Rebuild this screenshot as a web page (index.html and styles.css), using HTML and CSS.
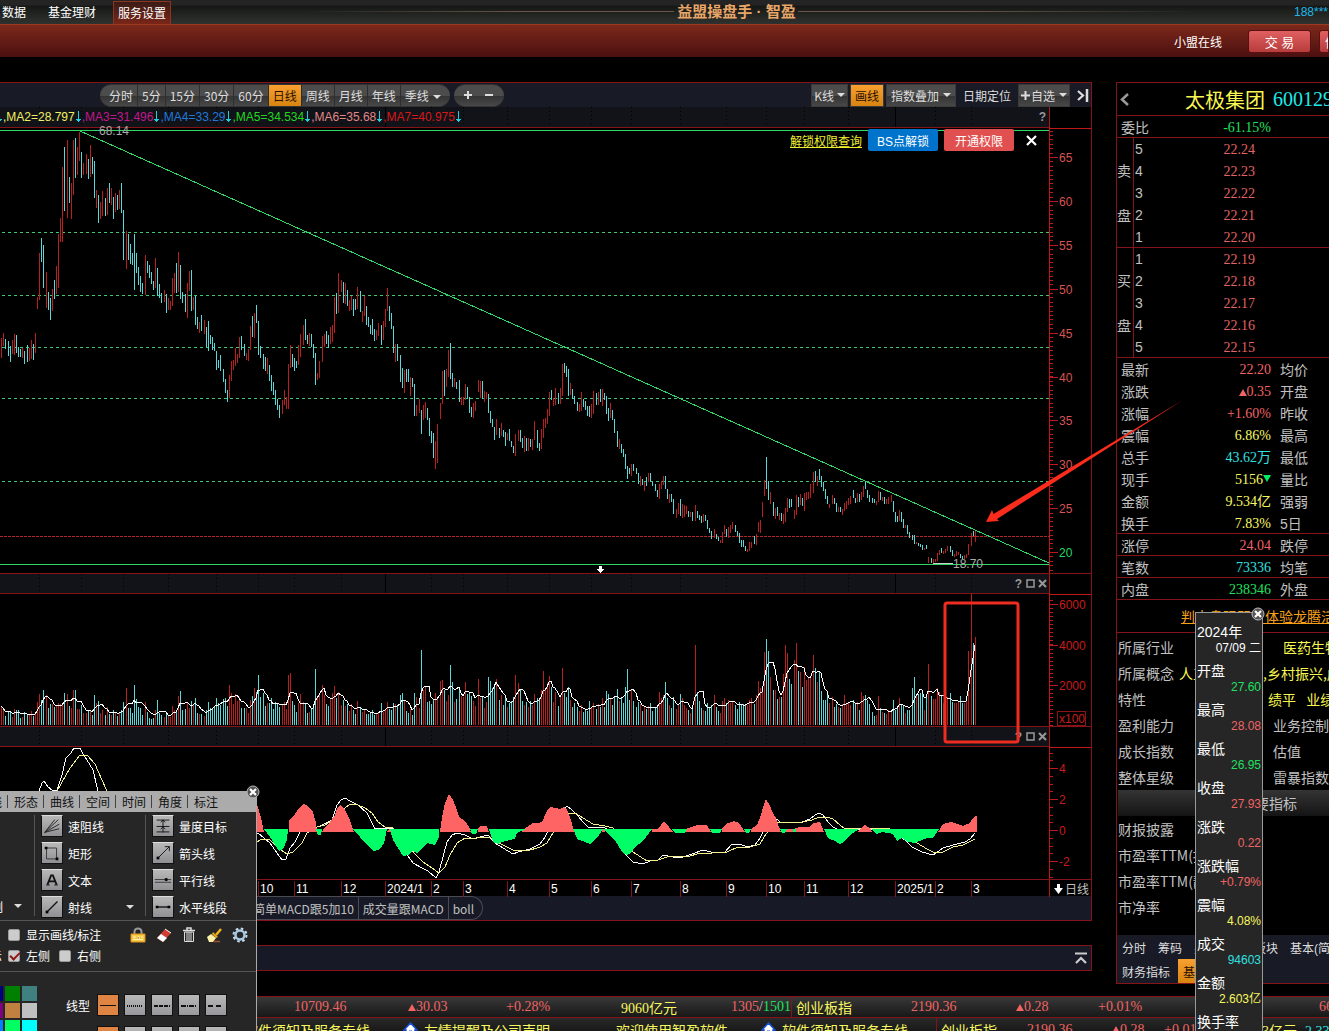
FILE: index.html
```
<!DOCTYPE html>
<html lang="zh-CN">
<head>
  <meta charset="UTF-8" />
  <meta name="viewport" content="width=device-width, initial-scale=1.0"/>
  <title>益盟操盘手 · 智盈</title>
  <link rel="stylesheet" href="styles.css">
</head>
<body>

  <!-- Title bar -->
  <header class="titlebar">
    <nav class="menu">
      <a href="#">数据</a>
      <a href="#">基金理财</a>
      <a href="#" class="active">服务设置</a>
    </nav>
    <span class="gold-line left"></span>
    <h1>益盟操盘手 · 智盈</h1>
    <span class="gold-line right"></span>
    <span class="user">188***</span>
  </header>
  <div class="redbar">
    <a href="#">小盟在线</a>
    <button class="trade-btn">交 易</button>
    <button class="trade-btn cut">信</button>
  </div>

  <main class="main">
    <div class="left-col">
      <section class="chart-box">
        <div class="toolbar">
          <div class="pill periods">
            <button>分时</button><button>5分</button><button>15分</button><button>30分</button><button>60分</button><button class="on">日线</button><button>周线</button><button>月线</button><button>年线</button><button class="last">季线<i class="caret"></i></button>
          </div>
          <div class="pill zoom">
            <button aria-label="放大"><svg width="10" height="10"><path d="M5 1v8M1 5h8" stroke="#ddd" stroke-width="2"/></svg></button>
            <button aria-label="缩小"><svg width="10" height="10"><path d="M1 5h8" stroke="#ddd" stroke-width="2"/></svg></button>
          </div>
          <div class="tools">
            <button class="tool">K线<i class="caret"></i></button>
            <button class="tool on">画线</button>
            <button class="tool">指数叠加<i class="caret"></i></button>
            <button class="tool flat">日期定位</button>
            <button class="tool"><svg width="9" height="9"><path d="M4.500 0v9M0 4.500h9" stroke="#ddd" stroke-width="2"/></svg>自选<i class="caret"></i></button>
            <button class="tool icon" aria-label="收起"><svg width="12" height="13"><path d="M1 2l5 4.500L1 11" fill="none" stroke="#ddd" stroke-width="2.200"/><path d="M10 0v13" stroke="#ddd" stroke-width="2.500"/></svg></button>
          </div>
        </div>

        <div class="row head ma">
          <div class="cell">
            <svg class="plot marks" viewBox="0 0 1049 20" preserveAspectRatio="xMaxYMid meet"></svg>
            <p class="ma-list">
              <span class="ar"></span><span class="y">,MA2=28.797</span><span class="ar"></span><span class="m">,MA3=31.496</span><span class="ar"></span><span class="b">,MA4=33.29</span><span class="ar"></span><span class="g">,MA5=34.534</span><span class="ar"></span><span class="p">,MA6=35.68</span><span class="ar"></span><span class="r">,MA7=40.975</span><span class="ar"></span>
            </p>
            <span class="head-icons">
              <b>?</b>
            </span>
          </div>
          <div class="gap"></div>
        </div>

        <div class="row price">
          <svg id="price" class="plot" viewBox="0 128 1049 445" preserveAspectRatio="xMaxYMid meet">
            <g class="fib">
              <path d="M2 232.500H1049M2 295.500H1049M2 347.500H1049M2 398.500H1049M2 481.500H1049"/>
            </g>
            <path class="last" d="M0 536.500H1049"/>
            <g id="candles"></g>
            <path class="trend" d="M80 131L1049 563"/>
            <path class="green" d="M0 130.500H1049M0 564.500H1049"/>
            <path d="M933 563.500H953" stroke="#ccc"/>
            <text x="99" y="135" class="gray">68.14</text>
            <text x="953" y="568" class="gray">18.70</text>
            <path d="M599 566h3v3h2.500l-4 4l-4-4h2.500z" fill="#fff"/>
          </svg>
          <svg id="priceAxis" class="axis" viewBox="1049 128 42 445"></svg>
          <div class="unlock">
            <a href="#">解锁权限查询</a>
            <button class="blue">BS点解锁</button>
            <button class="coral">开通权限</button>
            <button class="x" aria-label="关闭"><svg width="11" height="11"><path d="M1 1l9 9M10 1l-9 9" stroke="#fff" stroke-width="2.200"/></svg></button>
          </div>
        </div>

        <div class="row head">
          <div class="cell">
            <svg class="plot marks" viewBox="0 0 1049 19" preserveAspectRatio="xMaxYMid meet"></svg>
            <span class="head-icons"><b>?</b><svg width="9" height="9"><path d="M1 1h7v7H1z" fill="none" stroke="#999" stroke-width="1.500"/></svg><svg width="9" height="9"><path d="M1 1l7 7M8 1l-7 7" stroke="#999" stroke-width="2"/></svg></span>
          </div>
          <div class="gap"></div>
        </div>

        <div class="row vol">
          <svg class="plot" viewBox="0 594 1049 132" preserveAspectRatio="xMaxYMid meet">
            <g id="volume"></g>
            <polyline id="volumeMa" class="white"/>
          </svg>
          <svg id="volumeAxis" class="axis" viewBox="1049 594 42 132">
            <rect x="1057.500" y="711.500" width="28" height="14" fill="none" stroke="#8a1515"/>
            <text x="1059" y="723">x100</text>
          </svg>
        </div>

        <div class="row head">
          <div class="cell">
            <svg class="plot marks" viewBox="0 0 1049 19" preserveAspectRatio="xMaxYMid meet"></svg>
            <span class="head-icons"><b>?</b><svg width="9" height="9"><path d="M1 1h7v7H1z" fill="none" stroke="#999" stroke-width="1.500"/></svg><svg width="9" height="9"><path d="M1 1l7 7M8 1l-7 7" stroke="#999" stroke-width="2"/></svg></span>
          </div>
          <div class="gap"></div>
        </div>

        <div class="row macd">
          <svg class="plot" viewBox="0 747 1049 132" preserveAspectRatio="xMaxYMid meet">
            <polyline class="white" points="39,791 42,783 44,781 48,787 52,790 57,790 62,775 66,758 71,753 74,748 80,748 83,754 87,760 93,770 98,791 150,850 220,845 258,833 270,843 277,853 282,860 286,859 290,848 295,842 300,832 315,828 322,825 332,820 337,805 341,800 345,798 350,801 358,805 367,813 375,829 387,828 392,828 408,856 413,863 422,868 428,871 436,878 439,872 443,857 447,842 452,835 457,833 465,835 473,839 480,837 488,835 495,843 503,848 513,854 518,852 530,849 540,844 545,837 548,831 567,806 572,810 578,816 583,822 588,827 593,828 603,827 607,829 627,856 633,862 643,864 650,861 658,860 663,855 673,857 683,857 692,854 703,850 715,853 725,852 732,844 740,844 747,847 755,845 760,838 763,832 777,819 780,822 787,823 802,822 810,819 815,815 819,813 823,815 828,822 833,827 837,829 873,829 890,829 905,840 912,847 922,852 933,855 943,848 953,845 965,842 970,839 975,833"/>
            <polyline class="yellow" points="48,791 57,791 70,768 80,755 87,755 95,764 102,780 107,791 150,840 220,850 257,842 262,839 270,840 278,848 287,854 293,852 302,843 307,833 317,827 325,825 333,820 345,808 350,804 358,805 365,808 372,813 378,822 385,827 393,828 415,854 423,862 432,868 439,873 445,867 450,855 457,843 465,838 477,838 489,837 503,845 513,850 527,851 540,847 547,843 553,833 568,813 575,813 583,818 593,824 605,826 613,828 633,852 647,861 658,860 670,856 687,857 700,853 712,853 727,852 738,847 750,847 760,844 766,834 777,822 783,823 803,822 812,820 819,817 827,817 833,819 840,825 845,829 877,828 890,829 917,843 927,849 935,853 943,852 953,847 963,845 975,839"/>
            <path class="up" d="M250 832V800L257 804L261 818L264 832ZM289 832V820L295 814L300 807L304 804L308 806L313 812L316 823L317 832ZM322 832L324 828L330 822L335 815L337 808L341 805L345 810L350 820L354 832ZM387 832L389 829H391L393 832ZM440 832L442 817L445 803L449 794L453 800L456 807L459 817L465 821L469 827L471 832ZM478 832V828L481 826H487L489 832ZM522 832L524 829L533 823H538L542 822L547 811L550 807L555 808L560 809L564 807L567 810L571 820L574 832ZM602 832V829H605V832ZM652 832V829H657L661 825L664 821L669 827L673 832ZM686 832V829L697 825H707L711 832ZM722 832V828L728 823L734 821L739 823L745 832ZM751 832V829L757 825L761 815L763 807L766 799L770 806L773 813L776 818L779 827L781 832ZM786 832V829H793L800 827H810L813 823L820 822L824 832ZM857 832L860 829L865 825L870 828L872 832ZM938 832L943 824L951 822L963 826L970 823L973 818L976 816H977V832Z"/>
            <path class="down" d="M264 829L270 837L275 845L279 851L283 849L287 840L288 829ZM316 829L318 835H321L322 829ZM353 829L360 837L367 845L374 851L380 849L384 843L387 829ZM390 829L393 840L398 848L403 856L408 855L413 851L417 853L422 848L427 843L435 845L439 837V829ZM470 829L472 834H476L478 829ZM489 829L493 842L498 844L505 841L515 839L517 833L526 829ZM573 829L578 840L583 841L590 844L597 838L603 829ZM604 829L610 836L615 840L622 852L627 855L631 853L635 847L643 841L652 829ZM672 829L675 833H685L687 829ZM710 829L712 833H720L722 829ZM744 829L746 833H749L751 829ZM780 829L782 833H785L787 829ZM793 829V832H796V829ZM824 829L828 838L835 841L840 844L844 842L850 835L859 829ZM871 829L876 834L882 832L888 833L893 834L897 841L902 838L908 842L915 843L922 840L927 838L933 838L939 829Z"/>
          </svg>
          <svg id="macdAxis" class="axis" viewBox="1049 747 42 132"></svg>
        </div>

        <div class="row time">
          <svg id="time" class="plot" viewBox="0 880 1049 16" preserveAspectRatio="xMaxYMid meet"></svg>
          <div class="cycle"><svg width="9" height="10"><path d="M3 0h3v4h3L4.500 10L0 4h3z" fill="#fff"/></svg>日线</div>
        </div>

        <div class="strat">
          <button>简单MACD跟5加10</button><button>成交量跟MACD</button><button class="end">boll</button>
        </div>
      </section>

      <section class="fold">
        <button aria-label="展开"><svg width="12" height="13"><path d="M0 1.500h12M1 11l5-5l5 5" fill="none" stroke="#ccc" stroke-width="2.200"/></svg></button>
      </section>
    </div>

    <!-- Quote panel -->
    <aside class="quote">
      <div class="q-title">
        <svg width="9" height="13"><path d="M8 1L2 6.500L8 12" fill="none" stroke="#999" stroke-width="2.500"/></svg>
        <h2>太极集团</h2><span>600129</span>
      </div>
      <div class="q-row line"><span>委比</span><b class="g">-61.15%</b></div>
      <div class="depth">
        <div class="side"><span>卖</span><span>盘</span></div>
        <ul>
          <li>5<b>22.24</b></li><li>4<b>22.23</b></li><li>3<b>22.22</b></li><li>2<b>22.21</b></li><li>1<b>22.20</b></li>
        </ul>
      </div>
      <div class="depth">
        <div class="side"><span>买</span><span>盘</span></div>
        <ul>
          <li>1<b>22.19</b></li><li>2<b>22.18</b></li><li>3<b>22.17</b></li><li>4<b>22.16</b></li><li>5<b>22.15</b></li>
        </ul>
      </div>
      <div class="q-row"><span>最新</span><b class="r">22.20</b><span>均价</span></div>
      <div class="q-row"><span>涨跌</span><b class="r"><i class="tri"></i>0.35</b><span>开盘</span></div>
      <div class="q-row"><span>涨幅</span><b class="r">+1.60%</b><span>昨收</span></div>
      <div class="q-row"><span>震幅</span><b class="y">6.86%</b><span>最高</span></div>
      <div class="q-row"><span>总手</span><b class="c">43.62万</b><span>最低</span></div>
      <div class="q-row"><span>现手</span><b class="y">5156<i class="tri dn"></i></b><span>量比</span></div>
      <div class="q-row"><span>金额</span><b class="y">9.534亿</b><span>强弱</span></div>
      <div class="q-row line"><span>换手</span><b class="y">7.83%</b><span>5日</span></div>
      <div class="q-row line"><span>涨停</span><b class="r">24.04</b><span>跌停</span></div>
      <div class="q-row line"><span>笔数</span><b class="c">73336</b><span>均笔</span></div>
      <div class="q-row line"><span>内盘</span><b class="g">238346</b><span>外盘</span></div>
      <div class="promo"><a href="#">判大盘强弱，体验龙腾活动</a></div>

      <div class="info">
        <p class="wide"><span>所属行业</span><b>医药生物</b></p>
        <p class="tight"><span>所属概念</span><b>人工智能概念,乡村振兴,成渝</b></p>
        <p class="mid"><span>特性</span><b>绩平&ensp;&nbsp;业绩</b></p>
        <p><span>盈利能力</span><span>业务控制</span></p>
        <p><span>成长指数</span><span>估值</span></p>
        <p><span>整体星级</span><span>雷暴指数</span></p>
        <h3>重要指标</h3>
        <p><span>财报披露</span></p>
        <p><span>市盈率TTM(扣非)</span></p>
        <p><span>市盈率TTM(静)</span></p>
        <p><span>市净率</span></p>
      </div>
      <div class="q-tabs">
        <div><button>分时</button><button>筹码</button><button>买卖力道</button><button>板块</button><button>基本(简)</button></div>
        <div><button>财务指标</button><button class="on">基本面</button></div>
      </div>
    </aside>
  </main>

  <!-- Index tickers -->
  <footer class="tickers">
    <div class="ticker one">
      <span></span><span class="r">10709.46</span><span class="r"><i class="tri"></i>30.03</span><span class="r">+0.28%</span><span class="y">9060亿元</span><span><em class="r">1305</em>/<em class="g">1501</em></span><span class="y sep">创业板指</span><span class="r">2190.36</span><span class="r"><i class="tri"></i>0.28</span><span class="r">+0.01%</span><span class="r">66</span>
    </div>
    <div class="ticker two">
      <span></span><span class="y">软件须知及服务专线</span>
      <span class="y"><svg class="home" width="15" height="15"><path d="M7.500 1L1 8h2v7h9V8h2z" fill="#fff" stroke="#1550d8" stroke-width="1.500"/><path d="M6 9h3v6H6z" fill="#19b5f0" stroke="#1550d8"/></svg>友情提醒及公司声明</span>
      <span class="y">欢迎使用智盈软件</span>
      <span class="y"><svg class="home" width="15" height="15"><path d="M7.500 1L1 8h2v7h9V8h2z" fill="#fff" stroke="#1550d8" stroke-width="1.500"/><path d="M6 9h3v6H6z" fill="#19b5f0" stroke="#1550d8"/></svg>软件须知及服务专线</span>
      <span class="y sep">创业板指</span><span class="r">2190.36</span><span class="r"><i class="tri"></i>0.28</span><span class="r">+0.01%</span><span class="y end">1593亿元</span><span class="c">2.33亿</span>
    </div>
  </footer>

  <!-- Drawing toolbox window -->
  <section class="toolbox">
    <button class="close" aria-label="关闭"><svg width="14" height="14"><circle cx="7" cy="7" r="6" fill="#555" stroke="#bbb"/><path d="M4 4l6 6M10 4l-6 6" stroke="#fff" stroke-width="2.200"/></svg></button>
    <nav class="tb-tabs">
      <button class="first">直线</button><button>形态</button><button>曲线</button><button>空间</button><button>时间</button><button>角度</button><button>标注</button>
    </nav>
    <div class="tb-body">
      <div class="tb-cols">
        <div class="tb-col narrow"><span class="cut">例<i class="caret"></i></span></div>
        <div class="tb-col">
          <button><svg viewBox="0 0 22 22"><path d="M3 18L18 4M3 18L14 4M3 18L19 9M3 18L19 14" fill="none" stroke="#222"/></svg>速阻线</button>
          <button><svg viewBox="0 0 22 22"><path d="M5 5.500h11v12H5z" fill="none" stroke="#333"/><path d="M3 4h3v3H3zM15 16h3v3h-3z"/></svg>矩形</button>
          <button><svg viewBox="0 0 22 22"><path d="M6 16L10 6h2l4 10M8 12.500h6" fill="none" stroke="#111" stroke-width="2"/><path d="M4.500 16.500h4M13.500 16.500h4" stroke="#111"/></svg>文本</button>
          <button><svg viewBox="0 0 22 22"><path d="M6 16L17 5" stroke="#111" stroke-width="1.500"/><path d="M4 15h3v3H4z"/></svg>射线<i class="caret"></i></button>
        </div>
        <div class="tb-col">
          <button><svg viewBox="0 0 22 22"><path d="M4 4.500h14M4 11.500h14M4 17.500h14M11 4v14M8.500 7L11 4.500L13.500 7M8.500 14.500L11 12L13.500 14.500" fill="none" stroke="#111"/></svg>量度目标</button>
          <button><svg viewBox="0 0 22 22"><path d="M5 17L18 4M13 4h5v5" fill="none" stroke="#111"/><path d="M4 15h3v3H4z"/></svg>箭头线</button>
          <button><svg viewBox="0 0 22 22"><path d="M2 10.500h18M2 13.500h18" stroke="#333"/><path d="M13 9h3v3h-3z"/></svg>平行线</button>
          <button><svg viewBox="0 0 22 22"><path d="M4 11h14" stroke="#111" stroke-width="1.500"/><path d="M3 9.500h3v3H3zM16 9.500h3v3h-3z"/></svg>水平线段</button>
        </div>
      </div>
      <div class="tb-opts">
        <div class="opt">
          <label><input type="checkbox">显示画线/标注</label>
          <span class="opt-icons">
            <svg width="16" height="16"><path d="M4.500 8V4.500a3.500 3 0 0 1 7 0V8" fill="none" stroke="#999" stroke-width="2"/><path d="M1 7h14v8H1z" fill="#f8c848" stroke="#d89018"/><path d="M3 10h3M8 9.500h1v3M11 10h2M3 12.500h10" stroke="#fff3b0"/></svg>
            <svg width="16" height="16"><path d="M1 11L9 2l6 4l-8 9z" fill="#d33c32"/><path d="M1 11l4-4l6 4l-4 4z" fill="#fff"/><path d="M9 2l6 4" stroke="#fff"/></svg>
            <svg width="14" height="16"><path d="M1 3.500h12M5 3V1h4v2" fill="none" stroke="#ddd" stroke-width="1.500"/><path d="M2.500 5h9v9.500h-9zM5 5v9M7 5v9M9 5v9" fill="none" stroke="#ddd"/></svg>
            <svg width="16" height="16"><path d="M15 2l-5 6" stroke="#f0b020" stroke-width="2.500"/><path d="M7 5l5 5l-2 1l-4-4z" fill="#e8a818"/><path d="M5 7l5 4l-3 4H3L1 10z" fill="#fff0a8"/><path d="M8 14.500h6" stroke="#a05030" stroke-width="1.500"/></svg>
            <svg width="16" height="16"><circle cx="8" cy="8" r="6.500" fill="none" stroke="#c8dcec" stroke-width="2" stroke-dasharray="2.600 2.500"/><circle cx="8" cy="8" r="4.500" fill="none" stroke="#a8cce4" stroke-width="2.500"/></svg>
          </span>
        </div>
        <div class="opt"><span class="clip">示</span><label><input type="checkbox" checked>左侧</label><label><input type="checkbox">右侧</label></div>
      </div>
      <div class="tb-style">
        <div class="swatches" id="swatches"></div>
        <div class="lines">
          <span>线型</span>
          <div class="line-row" id="lineRow"></div>
          <div class="line-row" id="lineRow2"></div>
        </div>
      </div>
    </div>
  </section>

  <!-- Day detail window -->
  <section class="daybox">
    <button class="close" aria-label="关闭"><svg width="14" height="14"><circle cx="7" cy="7" r="6" fill="#555" stroke="#bbb"/><path d="M4 4l6 6M10 4l-6 6" stroke="#fff" stroke-width="2.200"/></svg></button>
    <dl>
      <dt>2024年</dt><dd>07/09 二</dd>
      <dt>开盘</dt><dd class="g">27.60</dd>
      <dt>最高</dt><dd class="r">28.08</dd>
      <dt>最低</dt><dd class="g">26.95</dd>
      <dt>收盘</dt><dd class="r">27.93</dd>
      <dt>涨跌</dt><dd class="r">0.22</dd>
      <dt>涨跌幅</dt><dd class="r">+0.79%</dd>
      <dt>震幅</dt><dd class="y">4.08%</dd>
      <dt>成交</dt><dd class="c">94603</dd>
      <dt>金额</dt><dd class="y">2.603亿</dd>
      <dt>换手率</dt>
    </dl>
  </section>

  <!-- Hand drawn marks -->
  <svg class="marker" width="1329" height="1031" viewBox="0 0 1329 1031">
    <rect x="945" y="603" width="73" height="139" rx="2" fill="none" stroke="#ee2c20" stroke-width="3"/>
    <path d="M986 522L992 510L993.500 514L1183 400L997 519L999 521Z" fill="#fb2c1c"/>
  </svg>

  <script src="chart.js"></script>
</body>
</html>
```
FILE: styles.css
```
* {
  box-sizing: border-box;
}
body {
  margin: 0;
  height: 100vh;
  overflow: hidden;
  position: relative;
  background-color: #000;
  color: #c0c0c0;
  font-family: "Liberation Sans", "Noto Sans CJK SC", sans-serif;
  font-size: 12px;
}
h1, h2, h3, p, ul, dl, dd {
  margin: 0;
  padding: 0;
  font-weight: normal;
}
ul {
  list-style: none;
}
button {
  margin: 0;
  padding: 0;
  border: none;
  background: none;
  color: inherit;
  font: inherit;
  white-space: nowrap;
  cursor: pointer;
}
a {
  color: inherit;
}
svg {
  display: block;
  flex: none;
}
i, em {
  font-style: normal;
}
.r { color: #f06464; }
.g { color: #20e060; }
.y { color: #f8f860; }
.c { color: #30e0e0; }

.caret {
  display: inline-block;
  border: 4px solid transparent;
  border-top-color: #ddd;
  border-bottom: 0;
  margin-left: 4px;
  vertical-align: 2px;
}
.tri {
  display: inline-block;
  border: 4px solid transparent;
  border-bottom: 7px solid #f06464;
  border-top: 0;
}
.tri.dn {
  border-bottom: 0;
  border-top: 7px solid #00f060;
  vertical-align: 2px;
}

/* title bar */
.titlebar {
  display: flex;
  align-items: center;
  height: 24px;
  background: linear-gradient(#242424 0 5px, #161816 6px, #303230);
  color: #fff;
}
.menu {
  display: flex;
  width: 300px;
  height: 24px;
  gap: 17px;
}
.menu a {
  padding: 0 2px;
  line-height: 27px;
  text-decoration: none;
  white-space: nowrap;
}
.menu a + a {
  padding: 0 3px;
}
.menu a.active {
  height: 23px;
  margin: 1px -3px 0;
  padding: 0 4px;
  line-height: 24px;
  border: 1px solid #8c3420;
  border-bottom: none;
  background: linear-gradient(#3a1c16, #7a2618);
}
.gold-line {
  flex: 374;
  height: 1px;
  margin-bottom: 2px;
  background: linear-gradient(to right, transparent, #6a5646 60%);
}
.gold-line.right {
  flex: 402;
  background: linear-gradient(to left, transparent, #6a5646 60%);
}
.titlebar h1 {
  width: 124px;
  text-align: center;
  font-size: 15px;
  font-weight: bold;
  line-height: 24px;
  white-space: nowrap;
  color: #e8a568;
}
.user {
  width: 128px;
  padding-left: 93px;
  color: #20b8e8;
}
.redbar {
  display: flex;
  justify-content: flex-end;
  align-items: center;
  height: 33px;
  overflow: hidden;
  border-top: 1px solid #9a3a20;
  background: linear-gradient(#7c281a, #4c1010);
  color: #fff;
}
.redbar a {
  margin-right: 26px;
  text-decoration: none;
}
.trade-btn {
  width: 63px;
  height: 23px;
  margin-right: 8px;
  border: 1px solid #5a1010;
  border-radius: 3px;
  background: linear-gradient(#e06060, #b83c3c);
  font-size: 13px;
}
.trade-btn.cut {
  width: 10px;
  margin-right: 0;
  padding-left: 5px;
  overflow: hidden;
  border-radius: 3px 0 0 3px;
}

/* columns */
.main {
  display: grid;
  grid-template-columns: minmax(0, 1fr) 213px;
  column-gap: 24px;
  padding-top: 25px;
  align-items: start;
}
.chart-box {
  border: 1px solid #841418;
  border-left: none;
}
.toolbar {
  display: flex;
  align-items: center;
  height: 24px;
  padding-left: 100px;
  background: #181a26;
  color: #ddd;
}
.toolbar,
.strat,
.info {
  font-family: "Noto Sans CJK SC", sans-serif;
}
.pill {
  display: flex;
  height: 23px;
  margin-right: 4px;
  border: 1px solid #333;
  border-width: 1px 0;
  border-radius: 12px;
  background: linear-gradient(#4c4c4c 0 50%, #333 50%, #484848);
  overflow: hidden;
}
.periods button {
  padding: 0 4px;
  border-right: 1px solid #2e2e2e;
}
.periods button:first-child {
  padding-left: 9px;
}
.periods .last {
  padding-right: 9px;
  border: none;
}
.toolbar .on,
.q-tabs .on {
  background: linear-gradient(#f8a030, #d88410);
  color: #281000;
}
.zoom {
  width: 50px;
  justify-content: center;
  gap: 11px;
}
.tools {
  display: flex;
  gap: 2px;
  margin-left: auto;
}
.tool {
  display: flex;
  align-items: center;
  height: 23px;
  padding: 0 4px;
  border: 1px solid #3a3a3a;
  background: linear-gradient(#4c4c4c 0 50%, #333 50%, #484848);
}
.tool:nth-child(1),
.tool:nth-child(5) {
  padding: 0 2px;
}
.tool:nth-child(1) .caret,
.tool:nth-child(5) .caret {
  margin-left: 3px;
}
.tool.flat,
.tool.icon {
  border: none;
  background: none;
}
.tool.flat {
  padding: 0 5px;
}
.tool:nth-child(5) {
  gap: 1px;
}
.tool.icon {
  padding: 0 2px 0 5px;
}

/* panes: plot + scale */
.row {
  display: grid;
  grid-template-columns: minmax(0, 1fr) 42px;
  position: relative;
}
.plot {
  width: 100%;
  height: 100%;
}
#price {
  overflow: visible;
}
.axis {
  width: 42px;
  height: 100%;
}
.price {
  height: 446px;
  border-bottom: 1px solid #841418;
}
.vol, .macd {
  height: 133px;
  border-bottom: 1px solid #841418;
}
.head {
  height: 20px;
}
.head.ma {
  height: 21px;
}
.head .cell {
  position: relative;
  display: flex;
  align-items: center;
  background-color: #121318;
  border-bottom: 1px solid #841418;
}
.head .gap {
  border-left: 1px solid #b01818;
}
.marks {
  position: absolute;
  inset: 0;
}
.head-icons {
  position: relative;
  display: flex;
  align-items: center;
  gap: 3px;
  margin-left: auto;
  padding-right: 2px;
  color: #999;
}
.head-icons b {
  width: 9px;
  text-align: center;
}
.ma-list {
  position: relative;
  display: flex;
  margin-left: -4px;
  white-space: nowrap;
}
.ma-list .ar {
  width: 7px;
  height: 13px;
  background:
    linear-gradient(#20d0e0, #20d0e0) 3px 1px / 1px 11px no-repeat,
    linear-gradient(#20d0e0, #20d0e0) 2px 10px / 3px 1px no-repeat,
    linear-gradient(#20d0e0, #20d0e0) 1px 9px / 5px 1px no-repeat;
}
.ma-list .y { color: #f0f060; }
.ma-list .m { color: #c0188c; }
.ma-list .b { color: #2078d8; }
.ma-list .g { color: #20d820; }
.ma-list .p { color: #e08888; }
.ma-list .r { color: #d81818; }

.plot path, .plot polyline {
  shape-rendering: crispEdges;
}
.fib path {
  fill: none;
  stroke: #40c870;
  stroke-dasharray: 3 3;
}
.plot .last {
  stroke: #b02828;
  stroke-dasharray: 3 1;
}
.trend, .green {
  fill: none;
  stroke: #30d868;
}
.gray {
  fill: #aaa;
}
.white {
  fill: none;
  stroke: #fff;
}
.yellow {
  fill: none;
  stroke: #f4f090;
}
.bar-up { fill: #b82020; }
.bar-down { fill: #58d8d8; }
.up { fill: #ff6464; }
.down { fill: #00ff66; }
.axis path {
  fill: none;
  stroke: #c01818;
}
.axis text {
  fill: #c81c1c;
}
#priceAxis text {
  fill: #d85454;
}
#priceAxis .low {
  fill: #20d860;
}
.unlock {
  position: absolute;
  top: 1px;
  right: 54px;
  display: flex;
  align-items: center;
  gap: 6px;
  color: #fff;
}
.unlock a {
  color: #f0f030;
}
.unlock button {
  width: 70px;
  height: 22px;
  border-radius: 2px;
}
.unlock .blue { background-color: #0074cc; }
.unlock .coral { background-color: #e05050; }
.unlock .x {
  width: 11px;
  height: 11px;
  margin-left: 6px;
}
.time {
  height: 16px;
}
.time text {
  fill: #fff;
}
#time path {
  stroke: #841418;
}
.cycle {
  display: flex;
  align-items: center;
  gap: 2px;
  padding-left: 4px;
  border-left: 1px solid #b01818;
}
.strat {
  display: flex;
  height: 24px;
  padding-left: 249px;
  background: #171a26;
}
.strat button {
  padding: 0 4px;
  border: 1px solid #4a4c54;
  border-left: none;
}
.strat .end {
  padding: 0 8px 0 4px;
  border-radius: 0 12px 12px 0;
}
.fold {
  display: flex;
  justify-content: flex-end;
  align-items: center;
  height: 26px;
  margin-top: 24px;
  padding-right: 4px;
  border: 1px solid #841418;
  border-left: none;
  background: #171a26;
}

/* quote panel */
.quote {
  border: 1px solid #841418;
  border-right: none;
  overflow: hidden;
  font-size: 14px;
  white-space: nowrap;
}
.quote b {
  font-family: "Liberation Serif", "Noto Sans CJK SC", serif;
  font-weight: normal;
}
.q-title {
  display: flex;
  align-items: center;
  height: 33px;
  padding-left: 3px;
  border-bottom: 1px solid #841418;
}
.q-title h2 {
  margin: 0 8px 0 56px;
  font-size: 20px;
  color: #f8f850;
}
.q-title span {
  font-family: "Liberation Serif", serif;
  font-size: 20px;
  color: #20e8e8;
}
.q-row {
  display: grid;
  grid-template-columns: 28px 122px 1fr;
  height: 22px;
  padding-left: 4px;
  line-height: 24px;
}
.q-row b {
  text-align: right;
}
.q-row b + span {
  padding-left: 9px;
}
.q-row.line {
  border-bottom: 1px solid #841418;
}
.depth {
  display: flex;
  height: 110px;
  border-bottom: 1px solid #841418;
}
.depth .side {
  display: flex;
  flex-direction: column;
  justify-content: space-around;
  width: 17px;
  padding: 10px 0;
  border-right: 1px solid #841418;
}
.depth li {
  display: flex;
  justify-content: space-between;
  width: 121px;
  height: 22px;
  padding-left: 1px;
  line-height: 23px;
}
.depth b {
  color: #e06464;
}
.promo {
  height: 33px;
  padding-left: 64px;
  line-height: 34px;
  border-bottom: 1px solid #841418;
  color: #f8a018;
}
.info {
  padding: 1px 0 15px 1px;
}
.info p {
  display: grid;
  grid-template-columns: 155px 1fr;
  line-height: 26px;
}
.info b {
  font-family: inherit;
  color: #f8f850;
}
.info .wide { grid-template-columns: 165px 1fr; }
.info .tight { grid-template-columns: 61px 1fr; }
.info .mid { grid-template-columns: 150px 1fr; }
.info h3 {
  padding-left: 123px;
  line-height: 26px;
  font-size: 14px;
  background: linear-gradient(#343434, #141414);
}
.q-tabs {
  padding-left: 5px;
  background: #181a26;
  color: #ddd;
  font-size: 12px;
}
.q-tabs div {
  display: flex;
  gap: 12px;
  height: 24px;
}
.q-tabs div + div {
  gap: 8px;
}
.q-tabs .on {
  padding: 0 5px;
}

/* tickers */
.tickers {
  margin-top: 12px;
}
.ticker {
  display: grid;
  align-items: center;
  height: 21px;
  border-top: 1px solid #841418;
  background: linear-gradient(#383838, #181818);
  font-family: "Liberation Serif", "Noto Sans CJK SC", serif;
  font-size: 14px;
  white-space: nowrap;
}
.ticker.one {
  grid-template-columns: 294fr 114fr 98fr 115fr 110fr 60fr 120fr 105fr 82fr 221fr 10fr;
}
.ticker.two {
  grid-template-columns: 244fr 159fr 213fr 145fr 175fr 91fr 85fr 52fr 77fr 64fr 24fr;
  height: 24px;
  background: linear-gradient(#2a2a2a, #0c0c0c);
}
.ticker span {
  display: flex;
  align-items: center;
  min-width: 0;
}
.ticker .sep {
  height: 100%;
  padding-left: 4px;
  border-left: 1px solid #841418;
}
.ticker .end {
  justify-content: flex-end;
  padding-right: 8px;
}
.home {
  margin-right: 6px;
}

/* drawing toolbox */
.toolbox {
  position: absolute;
  left: 0;
  top: 791px;
  bottom: 0;
  display: flex;
  flex-direction: column;
  width: 257px;
  color: #fff;
}
.close {
  position: absolute;
  top: -6px;
  right: -3px;
  z-index: 1;
}
.tb-tabs {
  display: flex;
  flex: none;
  height: 21px;
  overflow: hidden;
  background-color: #ababab;
  color: #111;
}
.tb-tabs button {
  position: relative;
  width: 36px;
  padding-left: 2px;
}
.tb-tabs button::before {
  content: "";
  position: absolute;
  left: 0;
  top: 4px;
  height: 13px;
  border-left: 1px solid #444;
}
.tb-tabs .first {
  display: flex;
  align-items: center;
  justify-content: flex-end;
  width: 7px;
  padding-right: 5px;
}
.tb-tabs .first::before {
  display: none;
}
.tb-body {
  flex: 1;
  min-height: 0;
  overflow: hidden;
  border-right: 1px solid #aaa;
  background-color: #262626;
}
.tb-cols {
  display: flex;
  height: 109px;
  padding-top: 3px;
  border-bottom: 1px solid #555;
}
.tb-col {
  display: flex;
  flex-direction: column;
  gap: 5px;
  width: 112px;
  height: 101px;
  padding-left: 6px;
  border-left: 1px solid #555;
}
.tb-col.narrow {
  width: 34px;
  padding: 0;
  border: none;
  justify-content: flex-end;
}
.tb-col .cut {
  display: flex;
  align-items: center;
  justify-content: flex-end;
  gap: 7px;
  height: 16px;
  padding-right: 12px;
  margin-bottom: 2px;
}
.tb-col button {
  display: flex;
  align-items: center;
  gap: 5px;
}
.tb-col button .caret {
  margin-left: auto;
  margin-right: 11px;
}
.tb-col svg {
  width: 22px;
  height: 22px;
  border: 1px solid #111;
  border-top-color: #ddd;
  background: linear-gradient(#b8b8b8, #909094);
}
.tb-opts {
  height: 51px;
  padding-top: 3px;
  border-bottom: 1px solid #555;
}
.opt {
  display: flex;
  align-items: center;
  gap: 9px;
  height: 21px;
  padding-left: 8px;
  position: relative;
}
.opt .clip {
  position: absolute;
  left: -10px;
}
.opt label {
  display: flex;
  align-items: center;
  gap: 6px;
}
.opt input {
  appearance: none;
  width: 12px;
  height: 12px;
  margin: 0;
  border: 1px solid #999;
  border-radius: 2px;
  background-color: #ccc;
}
.opt input:checked::after {
  content: "";
  display: block;
  width: 8px;
  height: 4px;
  margin: 1px;
  border: 2px solid #901818;
  border-top: none;
  border-right: none;
  transform: rotate(-45deg);
}
.opt-icons {
  display: flex;
  gap: 10px;
  margin: 0 8px 0 auto;
}
.tb-style {
  display: flex;
  align-items: flex-start;
  padding-top: 14px;
}
.swatches {
  display: grid;
  grid-template-columns: repeat(3, 15px);
  grid-auto-rows: 15px;
  gap: 2px;
  width: 49px;
  margin-left: -12px;
}
.sw-navy { background-color: #000080; }
.sw-green { background-color: #008000; }
.sw-teal { background-color: #408080; }
.sw-purple { background-color: #800080; }
.sw-tan { background-color: #c08040; }
.sw-silver { background-color: #c0c0c0; }
.sw-azure { background-color: #0080ff; }
.sw-lime { background-color: #00ff60; }
.sw-aqua { background-color: #00ffff; }
.lines {
  display: grid;
  grid-template-columns: 31px auto;
  row-gap: 10px;
  align-items: center;
  margin-left: 29px;
  padding-top: 8px;
}
.lines .line-row:last-child {
  grid-column: 2;
}
.line-row {
  display: flex;
  gap: 5px;
}
.line-row button {
  width: 22px;
  height: 22px;
  border: 1px solid #111;
  background: linear-gradient(#b8b8b8, #98989c);
}
.line-row button:first-child {
  background: #e08444;
}
.line-row path {
  shape-rendering: crispEdges;
}

/* day detail */
.daybox {
  position: absolute;
  top: 612px;
  bottom: 0;
  right: 66px;
  width: 68px;
  padding-top: 9px;
  border: 1px solid #999;
  border-bottom: none;
  background-color: #262626;
  color: #fff;
}
.daybox dt {
  padding-left: 1px;
  font-size: 14px;
  line-height: 20px;
}
.daybox dd {
  height: 19px;
  padding-right: 1px;
  line-height: 12px;
  text-align: right;
}
.marker {
  position: absolute;
  left: 0;
  top: 0;
  pointer-events: none;
}
```
FILE: chart.js
```
// one bar: colour (r up / c down) + x, high, low, volume height
const bars = `
r1,338,358,19 r3,333,346,15 c5,339,349,9 c8,341,356,14 c10,346,362,13 r12,340,354,8 r14,334,355,16 c16,335,353,15
c18,347,357,15 c20,349,357,7 r22,348,358,8 c24,351,364,13 c27,345,362,11 r29,348,361,10 r31,340,359,14 c33,344,360,9
r35,333,353,13 r37,297,309,23 r39,253,300,31 c41,238,262,25 c43,245,288,35 r46,272,308,30 c48,292,310,17 c50,298,320,21
r52,289,311,21 c54,280,299,18 r56,266,294,19 r58,234,288,22 r60,218,242,21 r62,167,242,20 c64,147,211,32 r67,140,218,31
c69,177,203,19 r71,183,219,17 r73,140,195,35 c75,138,178,35 r77,147,175,16 r79,132,161,16 c81,152,178,20 r83,163,175,12
r86,154,174,12 c88,159,179,15 r90,145,177,14 c92,157,174,10 c94,161,198,30 r96,190,208,22 c98,195,223,24 r100,202,219,12
r102,191,216,15 c105,198,216,10 r107,188,215,18 c109,183,203,11 r111,188,205,10 c113,197,219,15 r115,193,212,13
c117,195,210,9 r119,190,209,12 c121,183,213,15 c123,210,260,23 r126,231,269,37 c128,234,260,17 c130,244,264,17
c132,253,265,12 c134,234,290,40 c136,253,273,26 c138,267,285,18 c140,276,292,17 c142,283,294,10 r145,255,295,23
c147,261,273,13 c149,265,278,7 c151,272,284,6 c153,281,290,7 r155,258,288,15 c157,268,296,25 c159,284,298,12
c161,293,303,10 r164,290,302,8 c166,294,313,12 r168,298,310,9 r170,301,310,8 r172,278,306,19 r174,273,293,15
c176,263,293,15 r178,252,292,29 c180,265,299,34 c182,292,303,15 c185,294,312,16 r187,283,318,23 r189,271,291,17
c191,270,311,24 r193,297,310,21 c195,296,325,27 c197,317,329,12 r199,322,333,11 c201,315,331,11 r204,320,334,9
c206,327,347,15 c208,321,351,23 c210,335,344,17 c212,337,350,16 c214,343,351,19 c216,351,370,27 c218,360,368,22
c220,355,371,20 c223,369,382,26 c225,379,393,27 c227,390,402,19 r229,375,398,40 r231,361,381,32 r233,360,370,21
r235,348,366,31 r237,354,363,24 r239,337,358,28 c241,336,350,17 c244,344,356,17 r246,353,360,17 r248,349,361,12
r250,326,350,25 c252,316,337,29 r254,313,338,37 c256,305,323,33 c258,321,355,50 c260,346,358,28 c263,354,369,32
c265,357,371,19 r267,358,374,22 c269,365,381,22 c271,375,391,27 c273,382,395,16 c275,390,405,23 c277,399,410,22
c279,405,418,18 r282,400,414,20 r284,390,405,23 r286,397,409,16 r288,364,409,50 r290,345,368,52 c292,354,367,24
c294,358,371,20 c296,361,368,13 r298,345,365,22 r300,334,357,31 r303,325,345,23 c305,319,340,21 c307,335,344,12
r309,333,346,13 c311,334,347,17 c313,344,358,21 c315,353,385,56 r317,373,380,27 r319,361,378,31 r322,336,362,40
r324,334,347,30 c326,331,344,21 c328,335,348,19 r330,327,344,27 r332,325,342,32 r334,297,333,39 c336,293,314,27
r338,273,313,33 r341,280,292,20 c343,282,303,25 r345,283,304,19 c347,290,306,21 r349,300,311,14 r351,296,310,21
c353,299,316,15 c355,299,310,11 r357,287,309,24 c360,291,312,18 r362,311,322,13 r364,296,316,15 c366,306,325,11
c368,317,327,11 c370,325,334,13 c372,319,335,15 c374,329,341,10 r376,330,340,11 r378,323,336,13 c381,325,345,22
r383,321,340,13 r385,309,327,16 r387,288,311,23 c389,306,321,16 c391,313,329,15 c393,326,353,22 r395,344,362,21
c397,344,361,19 c400,355,382,30 c402,368,388,32 r404,370,393,25 c406,369,382,14 c408,369,382,12 r410,377,396,16
c412,378,387,10 c414,384,416,32 r416,405,416,28 r419,399,413,17 c421,410,434,75 r423,405,420,35 r425,402,418,38
c427,408,420,23 c429,418,436,24 c431,431,443,21 c433,433,458,26 r435,441,469,32 r437,424,463,27 r440,403,419,44
r442,371,404,45 c444,370,396,35 r446,369,387,24 r448,350,377,30 c450,343,379,60 c452,373,387,43 r454,378,387,23
c456,382,389,26 c459,380,402,38 r461,397,405,29 r463,397,405,28 r465,384,400,43 c467,387,399,31 c469,397,413,32
c471,407,417,29 r473,403,418,24 r475,401,411,19 r478,380,392,46 r480,381,398,27 c482,381,399,29 r484,391,402,17
r486,392,399,23 c488,394,413,48 c490,411,423,44 c492,419,427,37 c494,427,440,38 r496,419,435,46 c499,428,438,25
r501,423,436,30 c503,430,437,20 c505,432,446,28 r507,433,440,18 c509,429,441,22 c511,441,447,24 c513,446,453,28
r515,434,456,50 r518,430,441,42 c520,430,442,36 c522,438,448,24 r524,436,452,20 c526,438,451,23 r528,438,451,18
c530,439,447,24 r532,439,450,20 r534,421,440,31 c537,430,448,27 c539,443,451,25 r541,429,449,35 r543,419,438,54
r545,418,428,36 r547,409,424,42 r549,392,416,49 c551,390,400,38 r553,398,406,23 r555,388,405,33 c558,393,404,19
r560,388,404,28 r562,364,396,57 c564,363,373,32 c566,366,377,28 c568,369,396,38 r570,383,395,25 c572,389,399,18
c574,396,404,22 c577,402,411,18 r579,404,412,14 r581,392,411,20 c583,399,407,13 c585,401,410,16 c587,406,416,14
c589,406,417,24 r591,404,418,17 r593,391,414,22 c596,393,405,16 r598,392,405,21 c600,389,402,18 r602,389,406,27
c604,393,400,18 c606,396,414,34 c608,408,421,31 r610,403,418,27 c612,410,420,20 c614,419,433,29 c617,431,447,36
r619,439,449,24 c621,444,453,28 c623,449,457,22 c625,454,469,38 c627,466,479,56 c629,468,474,25 r631,464,476,35
c633,464,471,24 c636,468,474,18 c638,473,484,23 r640,476,486,21 c642,479,485,14 r644,482,491,18 c646,477,486,16
r648,473,482,19 c650,473,482,22 c652,482,486,14 c655,484,491,17 c657,490,497,19 r659,484,499,33 r661,481,489,27
r663,476,485,30 c665,476,489,43 c667,489,499,27 r669,494,503,20 c671,494,502,17 c673,499,514,28 r676,509,518,16
r678,503,514,20 c680,499,516,31 r682,504,518,27 r684,505,517,20 r686,506,514,17 c688,511,517,15 r690,512,517,12
c692,512,521,16 r695,505,521,80 c697,511,518,33 c699,515,520,24 c701,516,523,17 r703,514,522,15 c705,515,521,14
c707,520,529,22 c709,528,533,18 c711,531,539,20 r714,529,538,30 c716,534,539,18 c718,537,541,14 r720,540,543,12
r722,532,543,24 r724,525,534,27 c726,529,537,22 r728,527,538,25 r730,525,533,22 r732,522,529,24 c735,525,532,20
c737,531,536,16 c739,533,543,23 c741,540,547,21 c743,540,547,21 c745,546,551,21 r747,549,552,20 r749,542,551,25
r751,542,548,27 c754,536,544,21 r756,534,545,30 r758,522,532,44 r760,520,533,37 r762,502,517,35 r764,480,496,73
c766,457,489,86 c768,481,500,74 r770,492,504,48 c773,502,516,35 r775,508,519,35 c777,507,516,26 r779,513,520,28
c781,513,521,28 r783,514,524,51 r785,508,522,80 r787,498,512,72 c789,499,508,46 c791,499,507,41 r794,510,519,65
r796,495,515,82 c798,497,507,54 r800,494,505,53 c802,498,506,38 r804,493,511,58 r806,492,500,45 r808,492,499,47
r810,484,498,48 r813,472,493,70 c815,471,482,57 r817,476,486,43 c819,469,480,54 c821,476,487,34 c823,482,491,25
c825,489,499,25 c827,496,504,30 r829,504,508,22 r832,495,504,28 c834,498,504,18 c836,503,512,21 r838,507,512,18
c840,507,512,17 r842,509,515,21 r844,503,511,30 r846,501,509,21 r848,498,505,22 r850,496,504,20 c853,490,498,25
c855,498,503,21 r857,493,502,23 c859,494,502,15 r861,492,500,33 r863,486,497,29 c865,481,489,30 c867,490,498,25
c869,495,502,21 c872,498,503,13 c874,499,503,9 r876,501,505,10 r878,491,502,29 c880,492,500,17 r882,497,501,13
c884,497,504,12 r886,499,504,11 r888,497,504,15 r891,495,502,15 c893,501,512,25 c895,512,522,15 c897,516,522,17
r899,510,521,27 c901,512,522,21 c903,519,528,20 r905,525,528,12 c907,525,534,15 c909,532,538,15 c912,535,540,37
c914,535,544,48 r916,542,544,30 c918,543,546,31 c920,544,547,32 c922,545,550,33 r924,548,550,15 c926,545,549,30
r928,557,563,61 c931,558,563,29 r933,559,563,26 r935,559,562,26 r937,553,561,37 r939,550,555,33 c941,548,553,30
r943,551,554,22 r945,549,553,22 r947,546,551,28 c950,546,552,32 c952,550,556,23 r954,554,557,22 r956,551,556,22
r958,552,555,23 c960,554,558,29 c962,556,559,22 r964,555,559,22 r966,554,558,25 r968,544,555,74 r971,533,546,131
c973,531,536,82 r975,530,542,88`;

const months = [[39], [81], [123], [168], [216], [258, '10'], [294, '11'], [341, '12'], [385, '2024/1'], [431, '2'],
  [463, '3'], [507, '4'], [549, '5'], [591, '6'], [631, '7'], [680, '8'], [726, '9'], [766, '10'], [804, '11'],
  [848, '12'], [895, '2025/1'], [935, '2'], [971, '3']];

const list = bars.trim().split(/\s+/).map(s => {
  const [x, high, low, vol] = s.slice(1).split(',').map(Number);
  return { x, high, low, vol, up: s[0] === 'r' };
});

function rect(x, y, h, up) {
  return `<rect x="${x}" y="${y}" width="1" height="${h}" class="${up ? 'bar-up' : 'bar-down'}"/>`;
}

document.getElementById('candles').innerHTML = list.map(b => rect(b.x, b.high, b.low - b.high, b.up)).join('');
document.getElementById('volume').innerHTML = list.map(b => rect(b.x, 725 - b.vol, b.vol, b.up)).join('');

// 5 day average of the volume
document.getElementById('volumeMa').setAttribute('points', list.map((b, i) => {
  const part = list.slice(Math.max(0, i - 4), i + 1);
  const avg = part.reduce((sum, p) => sum + p.vol, 0) / part.length;
  return `${b.x},${Math.round(725 - avg)}`;
}).join(' '));

function drawAxis(id, top, bottom, first, step, minor, labels) {
  let d = `M1049.5 ${top}V${bottom}M1049 ${top + 0.5}H1091`;
  const gap = step / minor;
  for (let y = first - Math.floor((first - top - 2) / gap) * gap; y < bottom; y += gap) {
    d += `M1050 ${Math.round(y) + 0.5}h3`;
  }
  let text = '';
  labels.forEach((label, i) => {
    const y = Math.round(first + i * step);
    d += `M1050 ${y + 0.5}h8`;
    text += `<text x="1059" y="${y + 5}" class="${label === '20' ? 'low' : ''}">${label}</text>`;
  });
  document.getElementById(id).innerHTML += `<path d="${d}"/>${text}`;
}
drawAxis('priceAxis', 128, 573, 157, 43.9, 10, ['65', '60', '55', '50', '45', '40', '35', '30', '25', '20']);
drawAxis('volumeAxis', 594, 726, 604, 40.5, 10, ['6000', '4000', '2000']);
drawAxis('macdAxis', 747, 879, 768, 31, 4, ['4', '2', '0', '-2']);

document.getElementById('time').innerHTML = months.filter(m => m[1]).map(([x, label]) =>
  `<path d="M${x + 0.5} 880v16"/><text x="${x + 2}" y="892">${label}</text>`).join('');

document.querySelectorAll('.marks').forEach(svg => {
  svg.innerHTML = months.map(([x, label]) =>
    `<path d="M${x + 0.5} 0v20" stroke="#000" stroke-dasharray="${/\//.test(label) ? 'none' : '1 3'}"/>`).join('');
});

const colors = ['navy', 'green', 'teal', 'purple', 'tan', 'silver', 'azure', 'lime', 'aqua'];
document.getElementById('swatches').innerHTML = colors.map(c => `<span class="sw-${c}"></span>`).join('');

const dashes = ['none', '1 1', '4 1', '5 1 1 1', '5 3'];
['lineRow', 'lineRow2'].forEach(id => {
  document.getElementById(id).innerHTML = dashes.map((d, i) =>
    `<button aria-label="线型${i + 1}"><svg width="20" height="20"><path d="M2 ${i ? 11 : 10.5}h16" stroke="#111" stroke-width="${i ? 2 : 1}" stroke-dasharray="${d}"/></svg></button>`).join('');
});
```
